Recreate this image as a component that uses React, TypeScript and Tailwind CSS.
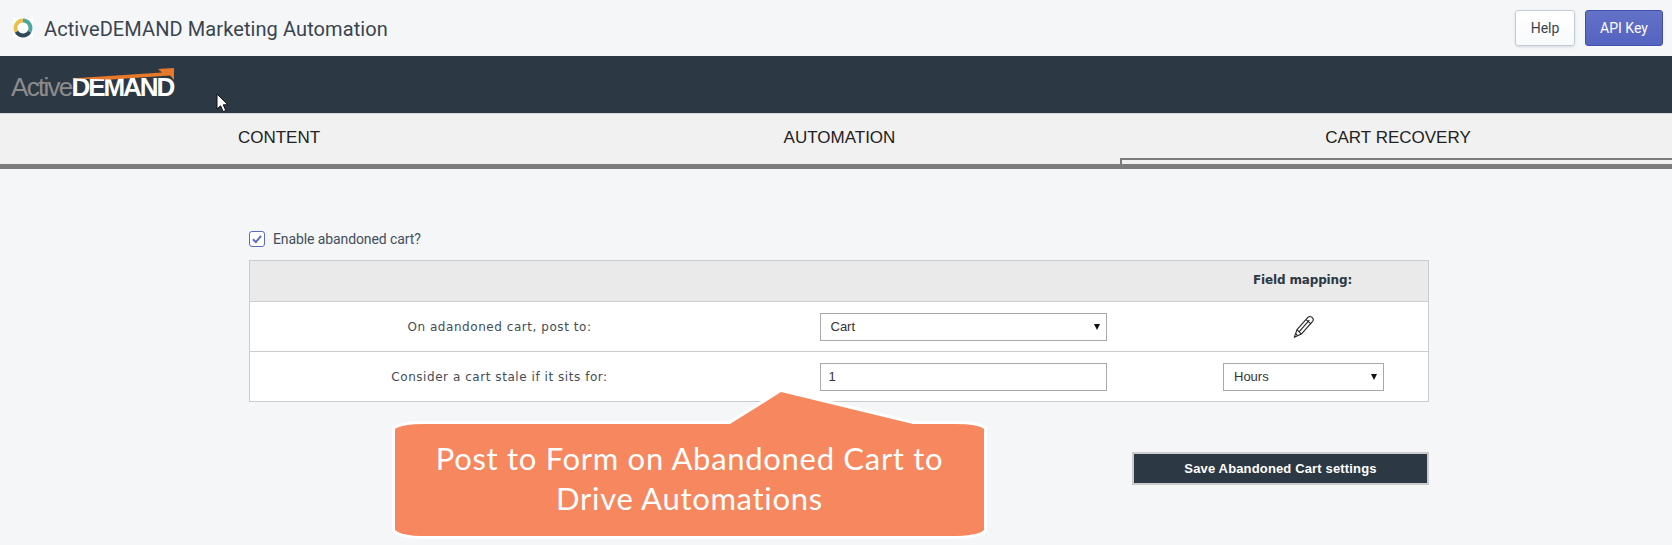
const Tab = ({ label, active }: { label: string; active?: boolean }) => (
  <div className="relative flex h-[51px] items-center justify-center text-[17px] text-[#222] [font-family:'Liberation_Sans',sans-serif]">
    <span className={active ? "pb-[3px] pl-[3px]" : "pb-[3px] pl-[1px]"}>{label}</span>
    {active && (
      <div className="absolute bottom-0 left-[-1px] right-0 h-[7px] border-l-2 border-t-2 border-[#7c7c7c]" />
    )}
  </div>
);

const Arrow = () => (
  <svg width="6" height="6" viewBox="0 0 6 6" className="absolute right-[6px] top-1/2 -translate-y-1/2">
    <path d="M0 0H6L3 6Z" fill="#111" />
  </svg>
);

const Select = ({ label, className }: { label: string; className: string }) => (
  <div className={`relative flex h-[28px] items-center border border-[#a9a9a9] bg-white pl-[10px] text-[13px] tracking-normal text-[#333] [font-family:'Liberation_Sans',sans-serif] ${className}`}>
    {label}
    <Arrow />
  </div>
);

export default function App() {
  return (
    <div className="relative h-[545px] w-[1672px] overflow-hidden bg-[#f4f6f8]">
      <header className="flex h-[56px] items-center justify-between pl-[13px] pr-[9px]">
        <div className="flex items-center gap-[11px]">
          <svg width="20" height="20" viewBox="0 0 20 20">
            <rect width="20" height="20" fill="#fff" />
            <path d="M1.8 14.75A9.5 9.5 0 0 1 10 .5V4.5A5.5 5.5 0 0 0 5.24 12.75Z" fill="#e9c04a" />
            <path d="M10 .5A9.5 9.5 0 0 1 18.2 14.75L14.76 12.75A5.5 5.5 0 0 0 10 4.5Z" fill="#4da79c" />
            <path d="M1.8 14.75A9.5 9.5 0 0 0 18.2 14.75L14.76 12.75A5.5 5.5 0 0 1 5.24 12.75Z" fill="#2e4a58" />
          </svg>
          <span className="pt-[1px] text-[20px] tracking-[0.09px] text-[#3a4450] [font-family:Roboto,sans-serif]">
            ActiveDEMAND Marketing Automation
          </span>
        </div>
        <div className="flex gap-[10px] text-[14px] [font-family:Roboto,sans-serif]">
          <button className="h-[36px] w-[60px] rounded-[3px] border border-[#c4cdd5] bg-gradient-to-b from-white to-[#f9fafb] text-[#3a4450] shadow-sm">
            Help
          </button>
          <button className="h-[36px] w-[78px] rounded-[3px] border border-[#3f4eae] bg-gradient-to-b from-[#6371c7] to-[#5563c1] text-white">
            API Key
          </button>
        </div>
      </header>

      <div className="flex h-[57px] items-center bg-[#2c3844] pl-[11px]">
        <div className="relative flex h-[40px] items-end pb-[4px] text-[26px] leading-[28px] tracking-[-1.7px] [font-family:'Liberation_Sans',sans-serif]">
          <span className="text-[#8c8c8c]">Active</span>
          <span className="font-bold tracking-[-2.1px] text-white">DEMAND</span>
          <svg width="105" height="14" viewBox="0 0 105 14" className="absolute left-[60px] top-[2px]">
            <path d="M0 11.5L91 5.5L87 2L103 1V13L99 8.5L40 12.5Z" fill="#e8792b" />
          </svg>
        </div>
      </div>

      <nav className="grid grid-cols-[557px_564px_551px] border-t border-[#d5d8db] bg-[#f1f1f1]">
        <Tab label="CONTENT" />
        <Tab label="AUTOMATION" />
        <Tab label="CART RECOVERY" active />
      </nav>
      <div className="mt-[-1px] h-[5px] bg-[#7c7c7c]" />

      <main className="ml-[249px] w-[1180px] pt-[62px]">
        <label className="flex h-[16px] items-center gap-[8px] text-[14px] tracking-[-0.1px] text-[#454f5b] [font-family:Roboto,sans-serif]">
          <span className="flex h-[16px] w-[16px] items-center justify-center rounded-[3px] border border-[#5c6ac4] bg-white">
            <svg width="14" height="14" viewBox="0 0 12 12" fill="none" stroke="#5c6ac4" strokeWidth="1.7">
              <path d="M2.5 6.2L5 8.6L9.5 3.4" />
            </svg>
          </span>
          Enable abandoned cart?
        </label>

        <div className="mt-[13px] border border-[#cccccc] bg-white text-[12px] tracking-[0.55px] text-[#444c56] [font-family:'DejaVu_Sans',sans-serif]">
          <div className="grid h-[40px] grid-cols-[499px_428px_251px] items-center bg-[#eaeaea]">
            <div />
            <div />
            <div className="pb-[2px] text-center text-[12px] font-bold tracking-[-0.15px] text-[#2c3844]">Field mapping:</div>
          </div>
          <div className="grid h-[50px] grid-cols-[499px_428px_251px] items-center border-t border-[#cccccc]">
            <div className="text-center">On adandoned cart, post to:</div>
            <div className="flex justify-center">
              <Select label="Cart" className="w-[287px]" />
            </div>
            <div className="flex justify-center">
              <svg width="24" height="24" viewBox="0 0 22 22" fill="none" stroke="#222" strokeWidth="1" strokeLinejoin="round">
                <path d="M5.5 13.5L15.5 2.2C16.5 1.2 18 1.2 19.3 2.2C20.6 3.4 20.7 4.8 19.8 5.9L9.5 17.5L3 20.5Z" />
                <path d="M13.8 4.2L18.5 8.3M5.5 13.5L9.5 17.5M4.3 17L6 18.8M7.4 15.4L16.8 4.6" />
              </svg>
            </div>
          </div>
          <div className="grid h-[50px] grid-cols-[499px_428px_251px] items-center border-t border-[#cccccc]">
            <div className="text-center">Consider a cart stale if it sits for:</div>
            <div className="flex justify-center">
              <div className="flex h-[28px] w-[287px] items-center border border-[#a9a9a9] bg-white pl-[8px] text-[13px] tracking-normal text-[#333] [font-family:'Liberation_Sans',sans-serif]">
                1
              </div>
            </div>
            <div className="flex justify-center pl-[2px]">
              <Select label="Hours" className="w-[161px]" />
            </div>
          </div>
        </div>

        <div className="mt-[50px] flex justify-end">
          <button className="h-[33px] w-[297px] border-2 border-[#cccccc] bg-[#2c3844] text-[13px] font-bold tracking-[0.15px] text-white [font-family:'Liberation_Sans',sans-serif]">
            Save Abandoned Cart settings
          </button>
        </div>
      </main>

      <div className="absolute left-[390px] top-[388px] h-[152px] w-[599px]">
        <svg width="599" height="152" viewBox="0 0 599 152" className="absolute inset-0">
          <path
            d="M5 41Q12 36 35 36L340 36L391 4L523 36L565 36Q588 36 594 41V142Q588 148 560 148H35Q12 148 5 142Z"
            fill="#f6875f"
            stroke="#ffffff"
            strokeWidth="6"
            paintOrder="stroke"
          />
        </svg>
        <div className="absolute left-0 right-0 top-[50px] text-center text-[31px] leading-[40px] tracking-[0.7px] text-white [font-family:Lato,sans-serif]">
          Post to Form on Abandoned Cart to
          <br />
          Drive Automations
        </div>
      </div>

      <svg width="13" height="20" viewBox="0 0 13 20" className="absolute left-[216px] top-[93px]">
        <path d="M1 1V16L4.6 12.8L7.2 18.6L9.8 17.4L7.2 11.8H12Z" fill="#fff" stroke="#111" strokeWidth="1" />
      </svg>
    </div>
  );
}
